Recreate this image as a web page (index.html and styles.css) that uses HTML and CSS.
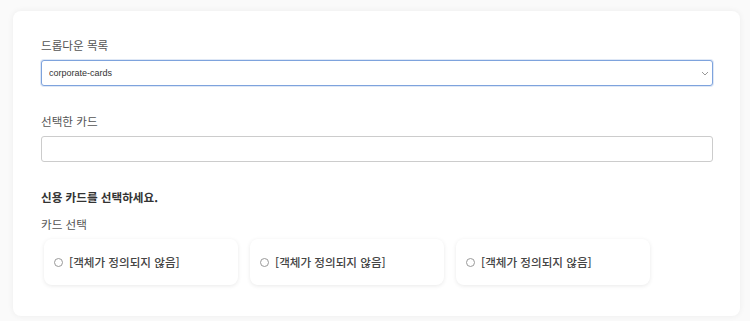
FILE: index.html
```html
<!DOCTYPE html>
<html lang="ko">
<head>
    <meta charset="UTF-8">
    <meta name="viewport" content="width=device-width, initial-scale=1.0">
    <title>카드 선택</title>
    <link rel="stylesheet" href="styles.css">
</head>
<body>
    <div class="panel">
        <div class="field">
            <label class="label">드롭다운 목록</label>
            <div class="select-wrap">
                <select class="select">
                    <option>corporate-cards</option>
                </select>
                <svg class="chevron" width="8" height="5" viewBox="0 0 8 5">
                    <path d="M1 1 L4 4 L7 1" fill="none" stroke="#999" stroke-width="1"/>
                </svg>
            </div>
        </div>

        <div class="field">
            <label class="label">선택한 카드</label>
            <input class="text-input" type="text">
        </div>

        <p class="title">신용 카드를 선택하세요.</p>
        <p class="label">카드 선택</p>

        <div class="cards">
            <div class="card"><span class="radio"></span>[객체가 정의되지 않음]</div>
            <div class="card"><span class="radio"></span>[객체가 정의되지 않음]</div>
            <div class="card"><span class="radio"></span>[객체가 정의되지 않음]</div>
        </div>
    </div>
</body>
</html>
```

FILE: styles.css
```css
body {
    font-family: "Noto Sans CJK KR", "Noto Sans", sans-serif;
    background-color: #fafafa;
    margin: 0;
    padding: 11px 10px 5px 13px;
}

.panel {
    background-color: white;
    border-radius: 8px;
    box-shadow: 0 0 6px rgba(0, 0, 0, 0.06);
    padding: 26px 27px 31px 28px;
}

.field {
    margin-bottom: 27px;
}

.label {
    display: block;
    margin: 0 0 7px;
    font-size: 11.6px;
    line-height: 16px;
    color: #555;
}

.select-wrap {
    position: relative;
}

.select {
    display: block;
    width: 100%;
    height: 26px;
    padding: 0 7px;
    border: 1px solid #7ea3dd;
    border-radius: 3px;
    background-color: white;
    font-family: "Liberation Sans", Arial, sans-serif;
    font-size: 9px;
    color: #333;
    appearance: none;
    -webkit-appearance: none;
    box-shadow: 0 0 0 1px rgba(126, 163, 221, 0.25);
    outline: none;
}

.chevron {
    position: absolute;
    right: 4px;
    top: 11px;
}

.text-input {
    display: block;
    box-sizing: border-box;
    width: 100%;
    height: 26px;
    border: 1px solid #ccc;
    border-radius: 3px;
    margin: 0;
}

.title {
    margin: 0 0 11px;
    font-size: 11.6px;
    line-height: 16px;
    font-weight: bold;
    color: #333;
}

.cards {
    display: flex;
    gap: 12px;
    padding-left: 3px;
}

.card {
    display: flex;
    align-items: center;
    width: 194px;
    height: 46px;
    box-sizing: border-box;
    padding-left: 10px;
    border-radius: 8px;
    background-color: white;
    box-shadow: 0 1px 4px rgba(0, 0, 0, 0.09);
    font-size: 11.6px;
    font-weight: 500;
    color: #444;
}

.radio {
    width: 7px;
    height: 7px;
    border: 1px solid #999;
    border-radius: 50%;
    margin-right: 6px;
}
```
